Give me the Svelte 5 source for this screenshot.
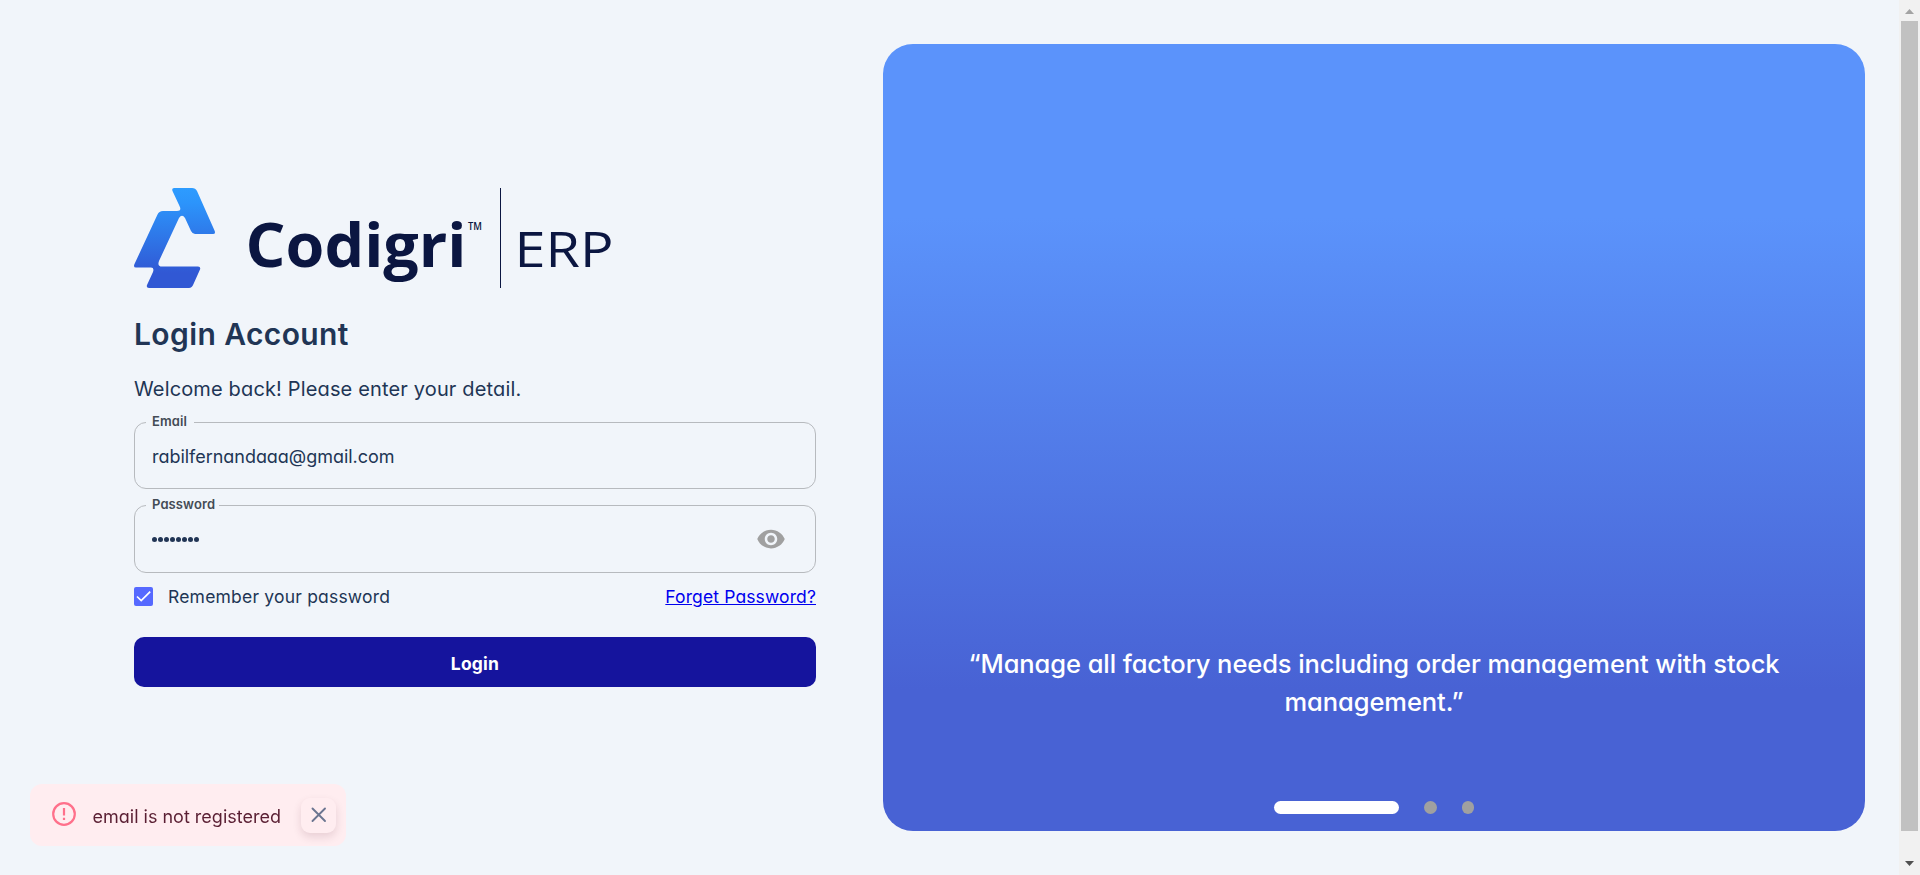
<script>
  let email = $state('rabilfernandaaa@gmail.com');
  let remember = $state(true);
  let toastOpen = $state(true);
</script>

<div class="page">
  <main class="login">
    <svg class="brand" width="480" height="102" viewBox="0 0 480 102" role="img" aria-label="Codigri ERP">
      <defs>
        <linearGradient id="mark" gradientUnits="userSpaceOnUse" x1="40" y1="0" x2="40" y2="100">
          <stop offset="0" stop-color="#2d9cff" />
          <stop offset="0.15" stop-color="#2c94fb" />
          <stop offset="0.85" stop-color="#3158d4" />
          <stop offset="1" stop-color="#3158d4" />
        </linearGradient>
      </defs>
      <path fill="url(#mark)" d="M40 0H58Q61.500 0 63 3L80.500 42.500Q82 46 79 46H61Q58.500 46 57 43L51 30Q48 25.500 45 30L25 73Q23 78.500 28 78.500H64Q67 78.500 66 81.500L59.500 96Q58 100 55 100H15Q12 100 13 97L19 84Q20.500 79.500 17 79.500H2Q-1 79.500 .5 76L23.500 26.500Q25 23 29 23H43Q48 23 45.500 18L38.500 3Q37.500 0 40 0Z" />
      <g fill="#0b1641">
        <text class="name" x="111.500" y="79" textLength="221" lengthAdjust="spacingAndGlyphs">Codigri</text>
        <text class="tm" x="334" y="41.500" textLength="14" lengthAdjust="spacingAndGlyphs">TM</text>
        <rect x="366" y="0" width="1" height="100" shape-rendering="crispEdges" />
        <text class="erp" x="380.500" y="79" textLength="99" lengthAdjust="spacingAndGlyphs">ERP</text>
      </g>
    </svg>

    <h1>Login Account</h1>
    <p class="welcome">Welcome back! Please enter your detail.</p>

    <label class="field">
      <span class="caption email-caption">Email</span>
      <input type="text" bind:value={email} />
    </label>

    <div class="field password">
      <span class="caption password-caption">Password</span>
      <div class="dots">
        {#each Array(8) as _}<i></i>{/each}
      </div>
      <svg class="eye" width="30" height="30" viewBox="0 0 24 24" fill="#a0a0a0">
        <path d="M12 4.500C7 4.500 2.730 7.610 1 12c1.730 4.390 6 7.500 11 7.500s9.270-3.110 11-7.500c-1.730-4.390-6-7.500-11-7.500zM12 17c-2.760 0-5-2.240-5-5s2.240-5 5-5 5 2.240 5 5-2.240 5-5 5zm0-8c-1.660 0-3 1.340-3 3s1.340 3 3 3 3-1.340 3-3-1.340-3-3-3z" />
      </svg>
    </div>

    <div class="options">
      <button class="check" aria-label="Remember your password" onclick={() => (remember = !remember)}>
        {#if remember}
          <svg width="19" height="19" viewBox="0 0 19 19" fill="none" stroke="#fff" stroke-width="1.700"><path d="M3 9.500L7.200 13.600L16.200 4.600" /></svg>
        {/if}
      </button>
      <span class="remember">Remember your password</span>
      <a href="#forget">Forget Password?</a>
    </div>

    <button class="submit">Login</button>
  </main>

  <section class="panel">
    <p class="quote">“Manage all factory needs including order management with stock<br />management.”</p>
    <div class="pager"><i class="active"></i><i></i><i class="last"></i></div>
  </section>

  <div class="scrollbar">
    <svg width="21" height="21" viewBox="0 0 21 21"><path d="M6 14L10.500 9L15 14Z" fill="#a3a3a3" /></svg>
    <div class="thumb"></div>
    <svg width="21" height="21" viewBox="0 0 21 21"><path d="M6 7L10.500 12L15 7Z" fill="#505050" /></svg>
  </div>
</div>

{#if toastOpen}
  <div class="toast">
    <svg width="24" height="24" viewBox="0 0 24 24" fill="none" stroke="#ff708b" stroke-width="2.200">
      <circle cx="12" cy="12" r="10.800" />
      <path d="M12 6V13.500M12 15.800V18" />
    </svg>
    <span>email is not registered</span>
    <button aria-label="Close" onclick={() => (toastOpen = false)}>
      <svg width="35" height="35" viewBox="0 0 35 35" fill="none" stroke="#6b7590" stroke-width="1.900" stroke-linecap="round"><path d="M11.500 10.500L24 23M24 10.500L11.500 23" /></svg>
    </button>
  </div>
{/if}

<style>
  :global(body) { background: #f1f5fa; overflow: hidden; font-feature-settings: "cv11" 1; }
  * { box-sizing: border-box; }
  .page { display: flex; height: 875px; background: #f1f5fa; font-family: Inter, "Open Sans", sans-serif; color: #213555; }
  .login { width: 682px; margin-left: 134px; padding-top: 188px; display: flex; flex-direction: column; }
  .brand { display: block; flex: none; overflow: visible; }
  .name { font: 700 60px "Open Sans", sans-serif; }
  .tm { font: 600 10px "Open Sans", sans-serif; }
  .erp { font: 400 50px "Open Sans", sans-serif; }
  h1 { margin: 24px 0 0; height: 40px; line-height: 40px; font-size: 30px; font-weight: 600; letter-spacing: 0.4px; white-space: nowrap; }
  .welcome { margin: 20px 0 0; height: 30px; line-height: 30px; font-size: 20px; letter-spacing: 0.150px; white-space: nowrap; }
  .field { position: relative; display: flex; align-items: center; height: 67px; margin-top: 18px; padding: 0 29px 0 17px; border: 1px solid #b7babe; border-radius: 12px; flex: none; }
  .password { margin-top: 16px; height: 68px; }
  .caption { position: absolute; left: 11px; top: -11px; height: 18px; padding: 0 4px 0 6px; background: #f1f5fa; color: #444b55; font-size: 13px; line-height: 18px; font-weight: 600; letter-spacing: 0.1px; }
  .email-caption { width: 48px; }
  .password-caption { width: 73px; }
  .field input { width: 100%; border: 0; outline: 0; padding: 1px 0 0; background: none; color: #213555; font-family: Inter, sans-serif; font-size: 18px; font-feature-settings: "cv11" 1; letter-spacing: -0.030px; }
  .dots { display: flex; gap: 1px; flex: 1; }
  .dots i { width: 5px; height: 5px; border-radius: 50%; background: #213555; }
  .eye { display: block; }
  .options { display: flex; align-items: center; height: 30px; margin-top: 8px; font-size: 17.500px; }
  .check { width: 19px; height: 19px; padding: 0; border: 0; border-radius: 2px; background: #5669ff; flex: none; }
  .check svg { display: block; }
  .remember { margin-left: 15px; flex: 1; letter-spacing: 0.2px; }
  .options a { color: #0000ee; letter-spacing: 0.120px; }
  .submit { margin-top: 26px; height: 50px; padding: 2px 0 0; border: 0; border-radius: 10px; background: #15149d; color: #fff; font-family: Inter, sans-serif; font-size: 17.500px; font-weight: 700; letter-spacing: 0.2px; flex: none; }
  .panel { width: 982px; height: 787px; margin: 44px 0 0 67px; border-radius: 30px; background: linear-gradient(180deg, #5b93fb 0%, #5b93fb 22%, #4862d4 82%, #4862d4 100%); display: flex; flex-direction: column; align-items: center; justify-content: flex-end; flex: none; }
  .quote { margin: 0 0 80px; color: #fff; font-size: 25.500px; line-height: 38px; font-weight: 500; letter-spacing: -0.080px; text-align: center; white-space: nowrap; }
  .pager { display: flex; gap: 25px; margin-bottom: 17px; }
  .pager i { width: 13px; height: 13px; border-radius: 7px; background: #a0a0a0; }
  .pager .active { width: 125px; background: #fff; }
  .pager .last { width: 12px; }
  .scrollbar { width: 21px; margin-left: auto; display: flex; flex-direction: column; align-items: center; background: #f1f1f1; }
  .scrollbar svg { flex: none; display: block; }
  .thumb { width: 17px; height: 810px; margin-bottom: auto; background: #c1c1c1; }
  .toast { position: fixed; left: 30px; top: 784px; width: 316px; height: 62px; padding: 0 10px 0 22px; display: flex; align-items: center; border-radius: 12px; background: #ffedf0; color: #5a1f33; font: 400 18px Inter, sans-serif; font-feature-settings: "cv11" 1; }
  .toast > svg { flex: none; margin-bottom: 2px; }
  .toast span { margin: 2px 0 0 16.500px; flex: 1; white-space: nowrap; }
  .toast button { width: 35px; height: 35px; padding: 0; border: 0; border-radius: 9px; background: #ffedf0; box-shadow: 0 4px 8px rgba(90, 31, 51, 0.14); flex: none; }
  .toast button svg { display: block; }
</style>
